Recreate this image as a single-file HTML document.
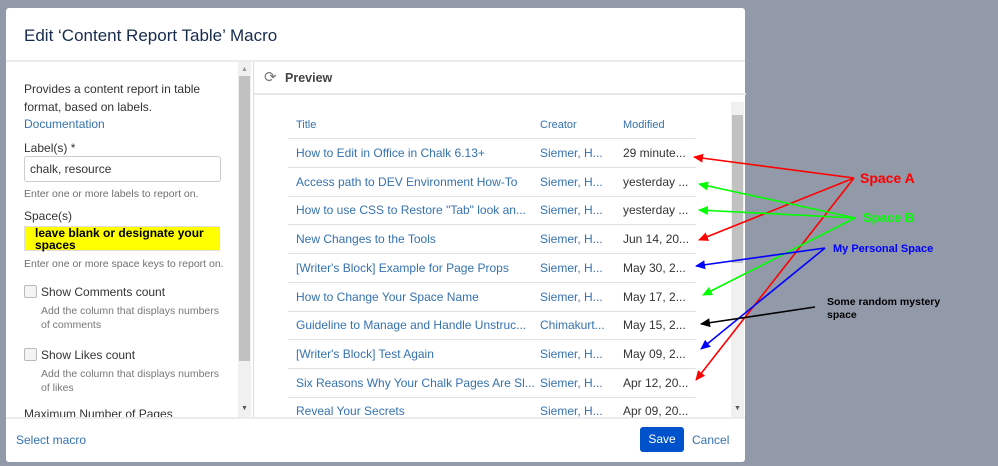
<!DOCTYPE html>
<html><head><meta charset="utf-8"><style>
body{margin:0;width:998px;height:466px;background:#9299a9;position:relative;overflow:hidden;font-family:"Liberation Sans",sans-serif;}
.dlg{position:absolute;left:6px;top:8px;width:739px;height:454px;background:#fff;border-radius:3px;}
.hdr{position:absolute;left:0;top:0;width:739px;height:52px;border-bottom:2px solid #ebecf0;}
.hdr h1{margin:0;position:absolute;left:18px;top:18px;font-size:17px;font-weight:normal;color:#172b4d;}
.left{position:absolute;left:0;top:54px;width:232px;height:355px;overflow:hidden;font-size:12px;color:#333;}
.abs{position:absolute;}
.lsb{position:absolute;left:232px;top:54px;width:13px;height:355px;background:#f0f0f0;}
.rp{position:absolute;left:247px;top:54px;width:492px;height:355px;border-left:1px solid #ddd;}
.foot{position:absolute;left:0;top:409px;width:739px;height:2px;background:#ebecf0;}
.t{position:absolute;font-size:12px;color:#3572b0;white-space:nowrap;}
.line{position:absolute;left:282px;width:408px;height:1px;background:#dfe1e5;}
.cb{position:absolute;width:11px;height:11px;border:1px solid #bbb;border-radius:2px;background:#f4f4f4;}
</style></head><body>
<div class="dlg">
<div class="hdr"><h1>Edit ‘Content Report Table’ Macro</h1></div>
<div class="left">
<div class="abs" style="left:18px;top:19px;line-height:17.5px;width:200px">Provides a content report in table format, based on labels.<br><span style="color:#3572b0">Documentation</span></div>
<div class="abs" style="left:18px;top:79px">Label(s) *</div>
<div class="abs" style="left:18px;top:94px;border:1px solid #ccc;border-radius:3px;line-height:24px;padding-left:5px;box-sizing:border-box;width:197px;height:26px">chalk, resource</div>
<div class="abs" style="left:18px;top:126px;font-size:10.5px;color:#707070">Enter one or more labels to report on.</div>
<div class="abs" style="left:18px;top:147px">Space(s)</div>
<div class="abs" style="left:18px;top:164px;width:196px;height:25px;background:#ffff00;border:1px solid #ddd;box-sizing:border-box;font-weight:bold;font-size:12px;color:#000;line-height:12px;padding-left:10px">leave blank or designate your spaces</div>
<div class="abs" style="left:18px;top:196px;font-size:10.5px;color:#707070">Enter one or more space keys to report on.</div>
<div class="cb" style="left:18px;top:223px"></div>
<div class="abs" style="left:35px;top:223px">Show Comments count</div>
<div class="abs" style="left:35px;top:242px;font-size:10.5px;color:#777;line-height:14px;width:180px">Add the column that displays numbers of comments</div>
<div class="cb" style="left:18px;top:286px"></div>
<div class="abs" style="left:35px;top:286px">Show Likes count</div>
<div class="abs" style="left:35px;top:305px;font-size:10.5px;color:#777;line-height:14px;width:180px">Add the column that displays numbers of likes</div>
<div class="abs" style="left:18px;top:345px">Maximum Number of Pages</div>
</div>
<div class="lsb"><div style="position:absolute;left:1px;top:14px;width:11px;height:285px;background:#c1c1c1"></div>
<div style="position:absolute;left:3px;top:4px;font-size:7px;color:#999">▲</div><div style="position:absolute;left:3px;top:343px;font-size:7px;color:#555">▼</div></div>
<div class="rp">
<div class="abs" style="left:0;top:0;width:492px;height:31px;border-bottom:2px solid #e8e8e8"></div>
<div class="abs" style="left:10px;top:6px;font-size:15px;color:#777">⟳</div>
<div class="abs" style="left:31px;top:9px;font-size:12.5px;font-weight:bold;color:#444">Preview</div>
<div class="abs" style="left:477px;top:40px;width:13px;height:315px;background:#f0f0f0"><div style="position:absolute;left:1px;top:13px;width:11px;height:148px;background:#c1c1c1"></div><div style="position:absolute;left:3px;top:303px;font-size:7px;color:#555">▼</div></div>
</div>
<div class="foot"></div>
<div class="t" style="left:10px;top:425px">Select macro</div>
<div class="abs" style="left:634px;top:419px;width:44px;height:25px;background:#0052cc;border-radius:3px;color:#fff;font-size:12px;text-align:center;line-height:25px">Save</div>
<div class="t" style="left:686px;top:425px">Cancel</div>
</div>
<div class="t" style="left:296px;top:119px;font-size:11px">Title</div>
<div class="t" style="left:540px;top:119px;font-size:11px">Creator</div>
<div class="t" style="left:623px;top:119px;font-size:11px">Modified</div>
<div class="line" style="left:288px;top:138px"></div>
<div id="rows"></div>
<script>
var r=[["How to Edit in Office in Chalk 6.13+","29 minute..."],["Access path to DEV Environment How-To","yesterday ..."],["How to use CSS to Restore \"Tab\" look an...","yesterday ..."],["New Changes to the Tools","Jun 14, 20..."],["[Writer's Block] Example for Page Props","May 30, 2..."],["How to Change Your Space Name","May 17, 2..."],["Guideline to Manage and Handle Unstruc...","May 15, 2..."],["[Writer's Block] Test Again","May 09, 2..."],["Six Reasons Why Your Chalk Pages Are Sl...","Apr 12, 20..."],["Reveal Your Secrets","Apr 09, 20..."]];
var h="";for(var i=0;i<r.length;i++){var y=146+i*28.7;h+='<div class="t" style="left:296px;top:'+y+'px">'+r[i][0]+'</div><div class="t" style="left:540px;top:'+y+'px">'+(i==6?"Chimakurt...":"Siemer, H...")+'</div><div class="t" style="left:623px;top:'+y+'px;color:#333">'+r[i][1]+'</div>';if(i<9)h+='<div class="line" style="left:288px;top:'+(167+i*28.7)+'px"></div>';}
document.getElementById("rows").innerHTML=h;
</script>
<svg width="998" height="466" style="position:absolute;left:0;top:0">
<defs>
<marker id="mr" markerUnits="userSpaceOnUse" markerWidth="10" markerHeight="9" refX="1" refY="4.5" orient="auto"><path d="M0,4.5 L10,0 L10,9z" fill="red"/></marker>
<marker id="mg" markerUnits="userSpaceOnUse" markerWidth="10" markerHeight="9" refX="1" refY="4.5" orient="auto"><path d="M0,4.5 L10,0 L10,9z" fill="#0f0"/></marker>
<marker id="mb" markerUnits="userSpaceOnUse" markerWidth="10" markerHeight="9" refX="1" refY="4.5" orient="auto"><path d="M0,4.5 L10,0 L10,9z" fill="blue"/></marker>
<marker id="mk" markerUnits="userSpaceOnUse" markerWidth="10" markerHeight="9" refX="1" refY="4.5" orient="auto"><path d="M0,4.5 L10,0 L10,9z" fill="#000"/></marker>
</defs>
<g stroke-width="1.6" fill="none">
<path d="M694,157 L854,178" stroke="red" marker-start="url(#mr)"/>
<path d="M699,240 L854,178" stroke="red" marker-start="url(#mr)"/>
<path d="M696,380 L854,178" stroke="red" marker-start="url(#mr)"/>
<path d="M699,184 L855,218" stroke="#0f0" marker-start="url(#mg)"/>
<path d="M699,210 L855,218" stroke="#0f0" marker-start="url(#mg)"/>
<path d="M703,295 L855,218" stroke="#0f0" marker-start="url(#mg)"/>
<path d="M696,266 L825,248" stroke="blue" marker-start="url(#mb)"/>
<path d="M701,349 L825,248" stroke="blue" marker-start="url(#mb)"/>
<path d="M701,324 L815,307" stroke="#000" marker-start="url(#mk)"/>
</g>
<g font-family="Liberation Sans,sans-serif" font-weight="bold">
<text x="860" y="183" fill="red" font-size="14">Space A</text>
<text x="863" y="222" fill="#0f0" font-size="13">Space B</text>
<text x="833" y="252" fill="blue" font-size="11">My Personal Space</text>
<text x="827" y="305" fill="#000" font-size="10.5">Some random mystery</text>
<text x="827" y="318" fill="#000" font-size="10.5">space</text>
</g>
</svg>
</body></html>
